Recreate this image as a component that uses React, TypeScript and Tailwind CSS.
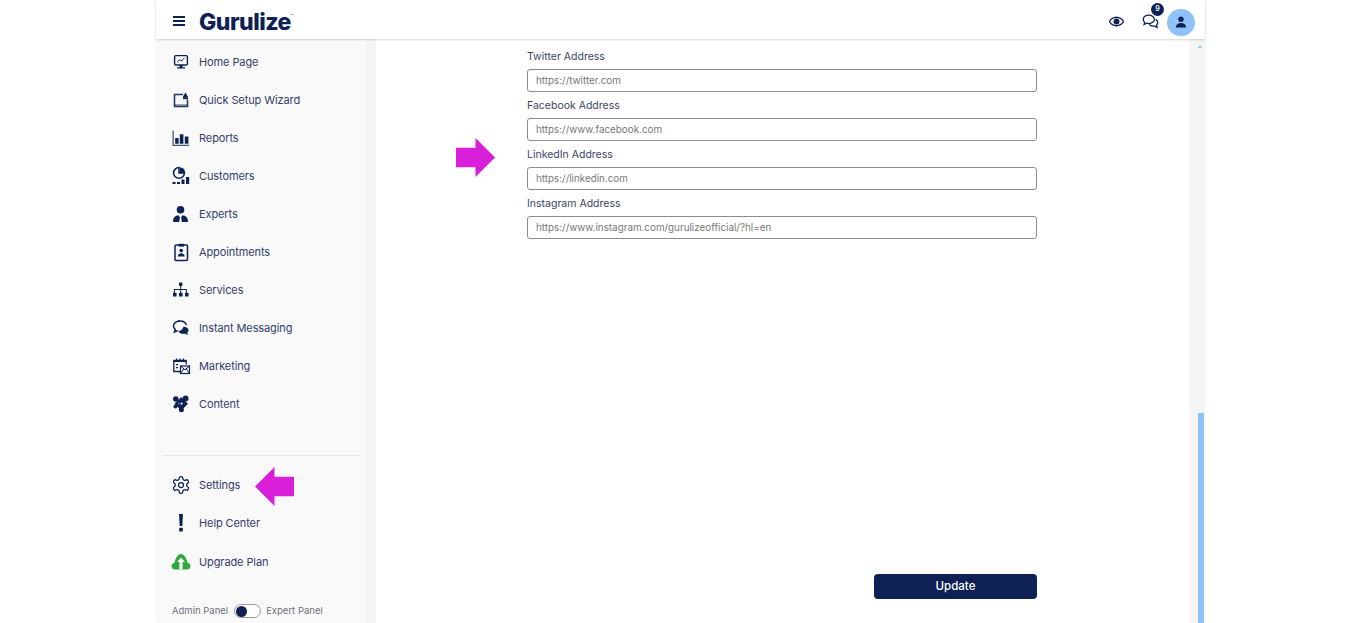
import type { ReactNode } from "react";

const navy = "#0d2155";

function Ico({ children }: { children: ReactNode }) {
  return (
    <svg viewBox="0 0 20 20" width={20} height={20} fill={navy} className="shrink-0">
      {children}
    </svg>
  );
}

const icons = {
  home: (
    <Ico>
      <rect x="3.600" y="3.600" width="12.800" height="9.400" rx="1.200" fill="none" stroke={navy} strokeWidth="1.400" />
      <path d="M6 10.200l2.600-2.400 1.800 1.200 3-3" fill="none" stroke={navy} strokeWidth="1" />
      <path d="M8.500 13h3v2.400h-3zM6 15.200h8v1.200H6z" />
    </Ico>
  ),
  wizard: (
    <Ico>
      <path d="M12 4.500H3.500v12h13v-7" fill="none" stroke="#2c3c68" strokeWidth="1.600" />
      <path d="M3.500 14h13v2.500h-13z" opacity=".4" />
      <path d="M14.400 2.600l2.800 4.600h-5.600z" />
      <path d="M12 7.200h5v2h-5z" />
    </Ico>
  ),
  reports: (
    <Ico>
      <path d="M1.500 2.500v15.500h16.500v-1.200H2.800V2.500z" opacity=".75" />
      <path d="M4.200 10h3.400v5.800H4.200zM8.800 6.200h3.600v9.600H8.800zM13.800 8.500h3.600v7.300h-3.600z" />
    </Ico>
  ),
  customers: (
    <Ico>
      <path d="M8 1.500a5.400 5.400 0 1 0 5.400 5.400H8z" fill="none" stroke={navy} strokeWidth="1.600" />
      <path d="M9 1.500a5 5 0 0 1 5 4.600H9z" />
      <path d="M1.500 16h3v2h-3zM6 16h3v2H6zM10.500 13.500h3V18h-3zM15 11h3.200v7H15z" />
    </Ico>
  ),
  experts: (
    <Ico>
      <circle cx="9.500" cy="5.800" r="3.800" />
      <path d="M2 17c0-3.600 2.600-5.400 5.400-5.800l1.500 2-.7 4.800h2.600l-.7-4.800 1.500-2c2.800.4 5.400 2.200 5.400 5.800 0 .8-.6 1-1.200 1H3.200C2.600 18 2 17.800 2 17z" />
    </Ico>
  ),
  appointments: (
    <Ico>
      <rect x="4" y="3" width="12.500" height="15.500" rx="1.200" fill="none" stroke={navy} strokeWidth="1.500" />
      <path d="M7.500 1.800h5.500v2.800H7.500z" />
      <circle cx="10.200" cy="8.600" r="1.800" />
      <path d="M6.800 14.500c0-2.200 1.500-3.200 3.400-3.200s3.400 1 3.400 3.200z" />
    </Ico>
  ),
  services: (
    <Ico>
      <rect x="8" y="2.500" width="3.400" height="3.400" rx=".6" />
      <path d="M9.200 5.500h1v3.500h5.600v4h-1v-3H10.200v3h-1v-3H3.900v3h-1v-4h6.300z" />
      <rect x="2" y="12.800" width="3.600" height="3.800" rx=".6" />
      <rect x="8" y="12.800" width="3.600" height="3.800" rx=".6" />
      <rect x="14" y="12.800" width="3.600" height="3.800" rx=".6" />
    </Ico>
  ),
  messaging: (
    <Ico>
      <path d="M9 3C5.400 3 2.500 5.200 2.500 8c0 1.300.7 2.500 1.700 3.300L3.500 14l3.200-1.500" fill="none" stroke={navy} strokeWidth="1.500" />
      <path d="M6.700 3.300c4-1.200 8 .6 8.600 3.700" fill="none" stroke={navy} strokeWidth="1.500" />
      <path d="M12.500 8.800c2.700 0 5 1.500 5 3.500 0 1-.5 1.800-1.300 2.400l.5 2.300-2.800-1.300c-2.800.4-6-.6-6.600-2.800 1.800.2 4-.8 5.200-4.100z" />
    </Ico>
  ),
  marketing: (
    <Ico>
      <path d="M10 15.500H2.800V4.500h12.400v4" fill="none" stroke={navy} strokeWidth="1.300" />
      <path d="M2.800 4.500h12.400v1.600H2.800zM5 2.500h1.200v2.500H5zM8.400 2.500h1.200v2.500H8.400zM11.800 2.500H13v2.500h-1.200z" />
      <path d="M5 8h2v1.300H5zM5 11h2v1.300H5z" />
      <rect x="9.500" y="10" width="9" height="7.500" fill="#f9f9f9" stroke={navy} strokeWidth="1.200" />
      <path d="M9.500 10l4.500 3.800 4.500-3.800M9.500 17.500l3.200-4.500M18.500 17.500l-3.200-4.500" fill="none" stroke={navy} strokeWidth="1" />
    </Ico>
  ),
  content: (
    <Ico>
      <circle cx="4.800" cy="5" r="2.800" />
      <circle cx="14.600" cy="4.400" r="2.900" />
      <circle cx="4.400" cy="12.500" r="1.900" />
      <circle cx="10.400" cy="15.800" r="2.500" />
      <rect x="5.500" y="5" width="9.500" height="9.500" transform="rotate(45 10.250 9.750)" />
      <circle cx="10.600" cy="9.600" r="1.100" fill="#f9f9f9" />
      <path d="M7 8.600l1.800 1.700" stroke="#f9f9f9" strokeWidth=".7" />
    </Ico>
  ),
  settings: (
    <svg viewBox="0 0 24 24" width={20} height={20} fill="none" stroke={navy} strokeWidth="1.500" className="shrink-0">
      <path d="M12.220 2h-.44a2 2 0 0 0-2 2v.18a2 2 0 0 1-1 1.730l-.43.250a2 2 0 0 1-2 0l-.15-.080a2 2 0 0 0-2.730.730l-.220.380a2 2 0 0 0 .730 2.730l.150.100a2 2 0 0 1 1 1.720v.510a2 2 0 0 1-1 1.740l-.150.090a2 2 0 0 0-.730 2.730l.220.380a2 2 0 0 0 2.730.730l.150-.080a2 2 0 0 1 2 0l.430.250a2 2 0 0 1 1 1.730V20a2 2 0 0 0 2 2h.440a2 2 0 0 0 2-2v-.180a2 2 0 0 1 1-1.730l.430-.250a2 2 0 0 1 2 0l.150.080a2 2 0 0 0 2.730-.730l.220-.390a2 2 0 0 0-.730-2.730l-.150-.080a2 2 0 0 1-1-1.740v-.500a2 2 0 0 1 1-1.740l.150-.090a2 2 0 0 0 .730-2.730l-.220-.380a2 2 0 0 0-2.730-.730l-.150.080a2 2 0 0 1-2 0l-.430-.250a2 2 0 0 1-1-1.730V4a2 2 0 0 0-2-2z" />
      <circle cx="12" cy="12" r="3" />
    </svg>
  ),
  help: (
    <Ico>
      <path d="M8 1h4l-.7 12H8.700z" />
      <rect x="8.200" y="14.800" width="3.600" height="3.600" rx=".5" />
    </Ico>
  ),
  upgrade: (
    <svg viewBox="0 0 20 20" width={20} height={20} fill="#2fa83c" className="shrink-0">
      <path d="M4 17.500c-2 0-3.500-1.400-3.500-3.200 0-1.700 1.200-3 2.800-3.200C4 7.500 6.500 2 10 2s6 5.500 6.700 9.100c1.600.2 2.800 1.500 2.800 3.200 0 1.800-1.500 3.200-3.500 3.200z" />
      <path d="M10 5.500l-4 4.600h2.400v7.400h3.200v-7.400H14z" fill="#f9f9f9" />
    </svg>
  ),
};

const topNav: [keyof typeof icons, string][] = [
  ["home", "Home Page"],
  ["wizard", "Quick Setup Wizard"],
  ["reports", "Reports"],
  ["customers", "Customers"],
  ["experts", "Experts"],
  ["appointments", "Appointments"],
  ["services", "Services"],
  ["messaging", "Instant Messaging"],
  ["marketing", "Marketing"],
  ["content", "Content"],
];

const socials = [
  { label: "Twitter Address", value: "https://twitter.com" },
  { label: "Facebook Address", value: "https://www.facebook.com" },
  { label: "LinkedIn Address", value: "https://linkedin.com" },
  { label: "Instagram Address", value: "https://www.instagram.com/gurulizeofficial/?hl=en" },
];

function NavRow({ icon, label }: { icon: keyof typeof icons; label: string }) {
  return (
    <div className="flex h-[38px] items-center gap-2 pl-[15px] text-[11px] tracking-[-0.1px] text-[#34406c]">
      {icons[icon]}
      <span>{label}</span>
    </div>
  );
}

function Header() {
  return (
    <header className="relative z-10 flex h-[39px] shrink-0 items-center bg-white pl-[17px] pr-[10px] pt-[3px] shadow-[0_1px_2px_rgba(0,0,0,0.16)]">
      <div className="flex w-[12px] flex-col gap-[2.500px]">
        <span className="h-[1.500px] bg-[#0d2155]" />
        <span className="h-[1.500px] bg-[#0d2155]" />
        <span className="h-[1.500px] bg-[#0d2155]" />
      </div>
      <div className="ml-[14px] mt-[3px] flex items-start text-[23px] font-extrabold leading-none tracking-[-0.500px] text-[#0d2155]">
        Gurulize
        <span className="mt-[3px] text-[4px] font-normal tracking-normal">™</span>
      </div>
      <div className="ml-auto flex items-center">
        <svg viewBox="0 0 24 24" width={17} height={17} fill={navy}>
          <path d="M12 5C7 5 2.800 8 1 12c1.800 4 6 7 11 7s9.200-3 11-7c-1.800-4-6-7-11-7zm0 12c-3.900 0-7.300-2-9-5 1.700-3 5.100-5 9-5s7.300 2 9 5c-1.700 3-5.100 5-9 5z" />
          <circle cx="12" cy="12" r="4.200" />
        </svg>
        <div className="relative ml-[17px] h-[16px] w-[17px]">
          <svg viewBox="0 0 20 20" width={17} height={17} fill="none" stroke={navy} strokeWidth="1.500">
            <path d="M8 2.500c-3.600 0-6.500 2.200-6.500 5 0 1.300.6 2.400 1.600 3.300l-.6 2.700 3-1.500c.8.300 1.600.4 2.500.4 3.600 0 6.500-2.200 6.500-4.900s-2.900-5-6.500-5z" />
            <path d="M16 7.500c1.500.9 2.500 2.200 2.500 3.700 0 1.100-.5 2.100-1.400 2.900l.6 2.900-3.100-1.700c-2.300.5-4.900-.1-6.100-1.800" />
          </svg>
          <span className="absolute -top-[10px] left-[9px] flex h-[13px] w-[13px] items-center justify-center rounded-full bg-[#0d2155] text-[7px] font-semibold text-white">
            9
          </span>
        </div>
        <div className="ml-[8px] mt-[2px] flex h-[27px] w-[28px] items-center justify-center rounded-full bg-[#90c2fa]">
          <svg viewBox="0 0 20 20" width={12} height={12} fill={navy}>
            <circle cx="10" cy="5.500" r="4.500" />
            <path d="M1.500 19c0-5 3.500-7.500 8.500-7.500s8.500 2.500 8.500 7.500z" />
          </svg>
        </div>
      </div>
    </header>
  );
}

function Sidebar() {
  return (
    <aside className="flex w-[210px] shrink-0 flex-col bg-[#f9f9f9] pt-[4px]">
      <nav>
        {topNav.map(([icon, label]) => (
          <NavRow key={label} icon={icon} label={label} />
        ))}
      </nav>
      <div className="mx-[6px] mt-[32px] h-px bg-[#e6e6e6]" />
      <div className="mt-[10px]">
        <NavRow icon="settings" label="Settings" />
        <NavRow icon="help" label="Help Center" />
        <div className="pt-px">
          <NavRow icon="upgrade" label="Upgrade Plan" />
        </div>
      </div>
      <div className="mt-[23px] flex items-center pl-[16px] text-[9.500px] text-[#6d7080]">
        <span>Admin Panel</span>
        <span className="ml-[6px] flex h-[14px] w-[27px] items-center rounded-full border border-[#9a9a9a] bg-white pl-[1px]">
          <span className="h-[11px] w-[11px] rounded-full bg-[#0d2155]" />
        </span>
        <span className="ml-[5px]">Expert Panel</span>
      </div>
    </aside>
  );
}

function Field({ label, value }: { label: string; value: string }) {
  return (
    <div className="h-[49px]">
      <div className="h-[23px] pt-[2px] text-[10.500px] leading-[18px] text-[#3a4468]">{label}</div>
      <input
        readOnly
        value={value}
        className="block h-[23px] w-full rounded-[3px] border border-[#8c8c8c] bg-white pb-[2px] pl-[8px] text-[9.850px] text-[#777] outline-none"
      />
    </div>
  );
}

function Main() {
  return (
    <main className="flex min-w-0 flex-1 bg-white">
      <div className="flex flex-1 flex-col pl-[151px] pr-[152px] pt-[7px]">
        {socials.map((s) => (
          <Field key={s.label} label={s.label} value={s.value} />
        ))}
        <button className="mt-[332px] ml-auto h-[25px] w-[163px] rounded-[4px] bg-[#0d2155] text-[11.500px] font-medium text-white">
          Update
        </button>
      </div>
      <div className="relative w-[16px] shrink-0 bg-[#f5f5f5]">
        <span className="absolute left-[9px] top-[6px] h-0 w-0 border-x-[2.500px] border-b-[3px] border-x-transparent border-b-[#90c2fa]" />
        <span className="absolute bottom-0 left-[9px] top-[374px] w-[6px] bg-[#90c2fa]" />
      </div>
    </main>
  );
}

function Arrow({ className, flip }: { className: string; flip?: boolean }) {
  return (
    <svg
      viewBox="0 0 40 40"
      width={39}
      height={39}
      fill="#d91fd9"
      className={className}
      style={flip ? { transform: "scaleX(-1)" } : undefined}
    >
      <path d="M0 10h20V0l20 20-20 20V30H0z" />
    </svg>
  );
}

export default function App() {
  return (
    <div className="relative h-[623px] overflow-hidden bg-white font-['Inter',sans-serif]">
      <div className="ml-[156px] flex h-[623px] w-[1049px] flex-col shadow-[0_0_2px_rgba(0,0,0,0.08)]">
        <Header />
        <div className="flex min-h-0 flex-1">
          <Sidebar />
          <div className="w-[10px] shrink-0 bg-[#f5f5f5]" />
          <Main />
        </div>
      </div>
      <Arrow className="absolute left-[456px] top-[138px]" />
      <Arrow className="absolute left-[255px] top-[467px]" flip />
    </div>
  );
}
